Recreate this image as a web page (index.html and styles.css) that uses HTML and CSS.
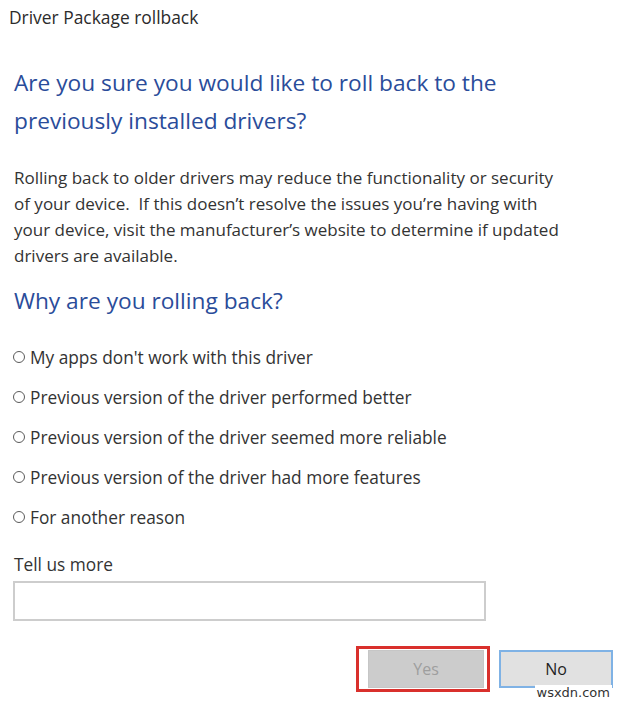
FILE: index.html
```html
<!DOCTYPE html>
<html>
<head>
<meta charset="utf-8">
<link rel="stylesheet" href="styles.css">
</head>
<body>
<div class="dialog">
  <div class="title">Driver Package rollback</div>
  <h1 class="heading first">Are you sure you would like to roll back to the previously installed drivers?</h1>
  <p class="body">Rolling back to older drivers may reduce the functionality or security<br>of your device.&nbsp; If this doesn’t resolve the issues you’re having with<br>your device, visit the manufacturer’s website to determine if updated<br>drivers are available.</p>
  <h2 class="heading second">Why are you rolling back?</h2>
  <ul class="options">
    <li class="option"><span class="radio"></span>My apps don't work with this driver</li>
    <li class="option"><span class="radio"></span>Previous version of the driver performed better</li>
    <li class="option"><span class="radio"></span>Previous version of the driver seemed more reliable</li>
    <li class="option"><span class="radio"></span>Previous version of the driver had more features</li>
    <li class="option"><span class="radio"></span>For another reason</li>
  </ul>
  <div class="more-label">Tell us more</div>
  <div class="textbox"></div>
  <div class="buttons">
    <div class="highlight"><div class="btn yes">Yes</div></div>
    <div class="btn no">No</div>
  </div>
  <div class="watermark">wsxdn.com</div>
</div>
</body>
</html>
```

FILE: styles.css
```css
html, body {
  margin: 0;
  padding: 0;
  background: #ffffff;
}
body {
  width: 624px;
  height: 704px;
  overflow: hidden;
  font-family: "Open Sans", "Noto Sans", sans-serif;
  color: #333333;
}
.dialog {
  position: relative;
  width: 624px;
  height: 704px;
  padding: 0 0 0 14px;
  box-sizing: border-box;
}
.title {
  font-size: 17.4px;
  line-height: 22px;
  padding-top: 6px;
  margin-left: -5px;
  color: #2b2b2b;
}
.heading {
  font-weight: normal;
  color: #2a4c9a;
  margin: 0;
  font-size: 22.7px;
}
.heading.first {
  margin-top: 36px;
  line-height: 38px;
  width: 520px;
}
.body {
  margin: 25px 0 0 0;
  font-size: 17px;
  line-height: 26px;
  white-space: nowrap;
  color: #333333;
}
.heading.second {
  margin-top: 14px;
  line-height: 36px;
}
.options {
  list-style: none;
  margin: 18px 0 0 0;
  padding: 0;
}
.option {
  display: flex;
  align-items: center;
  height: 40px;
  font-size: 17.3px;
  color: #333333;
  margin-left: -1px;
}
.radio {
  width: 10px;
  height: 10px;
  border: 1px solid #5a5a5a;
  border-radius: 50%;
  margin-right: 5px;
  flex: none;
}
.more-label {
  margin-top: 17px;
  font-size: 17.3px;
  line-height: 22px;
}
.textbox {
  margin-top: 5px;
  margin-left: -1px;
  width: 469px;
  height: 36px;
  border: 2px solid #cdcdcd;
  background: #ffffff;
}
.buttons {
  display: flex;
  align-items: center;
  margin-top: 25px;
  margin-left: 342px;
}
.highlight {
  border: 3px solid #d9302c;
  padding: 1px 3px 1px 9px;
  background: #ffffff;
}
.btn {
  width: 116px;
  height: 38px;
  box-sizing: border-box;
  display: flex;
  align-items: center;
  justify-content: center;
  font-size: 16px;
}
.btn.yes {
  background: #cccccc;
  color: #9e9e9e;
  border: 1px solid #c6c6c6;
}
.btn.no {
  margin-left: 9px;
  width: 114px;
  background: #e1e1e1;
  color: #1e1e1e;
  border: 2px solid #7fb2e5;
}
.watermark {
  position: absolute;
  right: 12px;
  bottom: 4px;
  font-family: "DejaVu Sans", sans-serif;
  font-size: 13px;
  color: #333333;
  background: #ffffff;
  padding: 0 2px;
}
```
